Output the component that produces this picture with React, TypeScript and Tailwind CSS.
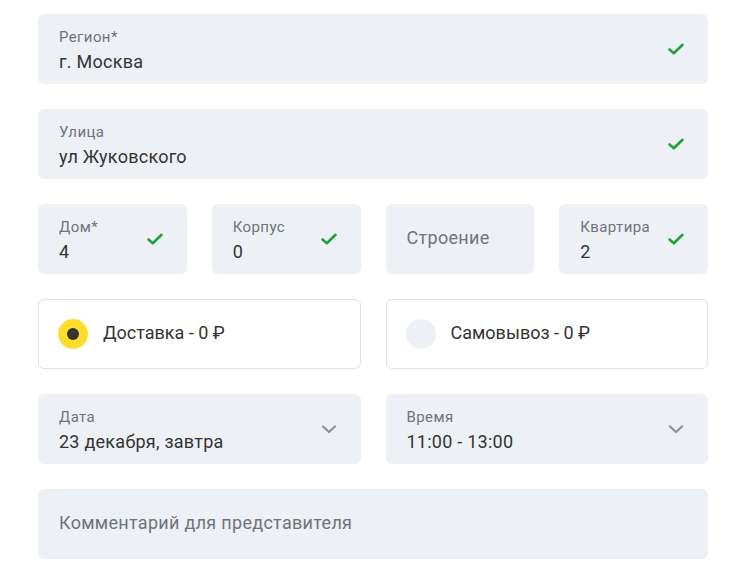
import React from 'react';

const Check = () => (
  <svg width="18" height="14" viewBox="0 0 18 14" fill="none" className="shrink-0">
    <path d="M2.5 7.5 L6.8 11.2 L15.5 2.8" stroke="#21a038" strokeWidth="2.6" strokeLinecap="round" strokeLinejoin="round" />
  </svg>
);

const Chevron = () => (
  <svg width="18" height="12" viewBox="0 0 18 12" fill="none" className="shrink-0">
    <path d="M3 3.5 L9 9 L15 3.5" stroke="#8c9099" strokeWidth="2.2" strokeLinecap="round" strokeLinejoin="round" />
  </svg>
);

function Field({ label, value, icon }: { label: string; value: string; icon?: React.ReactNode }) {
  return (
    <div className="flex h-[70px] items-center justify-between rounded-[6px] bg-[#edf1f6] pl-[21px] pr-[23px]">
      <div className="flex flex-col pt-[3px]">
        <span className="text-[15px] leading-[18px] tracking-[0.4px] text-[#707378]">{label}</span>
        <span className="mt-[5px] text-[18px] leading-[22px] tracking-[0.25px] text-[#333333]">{value}</span>
      </div>
      {icon}
    </div>
  );
}

function Placeholder({ text }: { text: string }) {
  return (
    <div className="flex h-[70px] items-center rounded-[6px] bg-[#edf1f6] pb-[3px] pl-[21px]">
      <span className="text-[18px] tracking-[0.3px] text-[#707378]">{text}</span>
    </div>
  );
}

function Radio({ label, checked }: { label: string; checked?: boolean }) {
  return (
    <div className="flex h-[70px] items-center gap-[15px] rounded-[6px] border border-[#dcdfe3] bg-white pl-[19px]">
      {checked ? (
        <span className="flex h-[30px] w-[30px] items-center justify-center rounded-full bg-[#ffdd2d]">
          <span className="h-[12px] w-[12px] rounded-full bg-[#333333]" />
        </span>
      ) : (
        <span className="h-[30px] w-[30px] rounded-full bg-[#edf1f6]" />
      )}
      <span className="pb-[3px] text-[18px] text-[#333333]">{label}</span>
    </div>
  );
}

export default function App() {
  return (
    <div className="min-h-screen bg-white px-[38px] pt-[14px]" style={{ fontFamily: 'Roboto, "Noto Sans", sans-serif' }}>
      <div className="flex w-[670px] flex-col gap-[25px]">
        <Field label="Регион*" value="г. Москва" icon={<Check />} />
        <Field label="Улица" value="ул Жуковского" icon={<Check />} />
        <div className="grid grid-cols-4 gap-[25px]">
          <Field label="Дом*" value="4" icon={<Check />} />
          <Field label="Корпус" value="0" icon={<Check />} />
          <Placeholder text="Строение" />
          <Field label="Квартира" value="2" icon={<Check />} />
        </div>
        <div className="grid grid-cols-2 gap-[25px]">
          <Radio label="Доставка - 0 ₽" checked />
          <Radio label="Самовывоз - 0 ₽" />
        </div>
        <div className="grid grid-cols-2 gap-[25px]">
          <Field label="Дата" value="23 декабря, завтра" icon={<Chevron />} />
          <Field label="Время" value="11:00 - 13:00" icon={<Chevron />} />
        </div>
        <Placeholder text="Комментарий для представителя" />
      </div>
    </div>
  );
}
